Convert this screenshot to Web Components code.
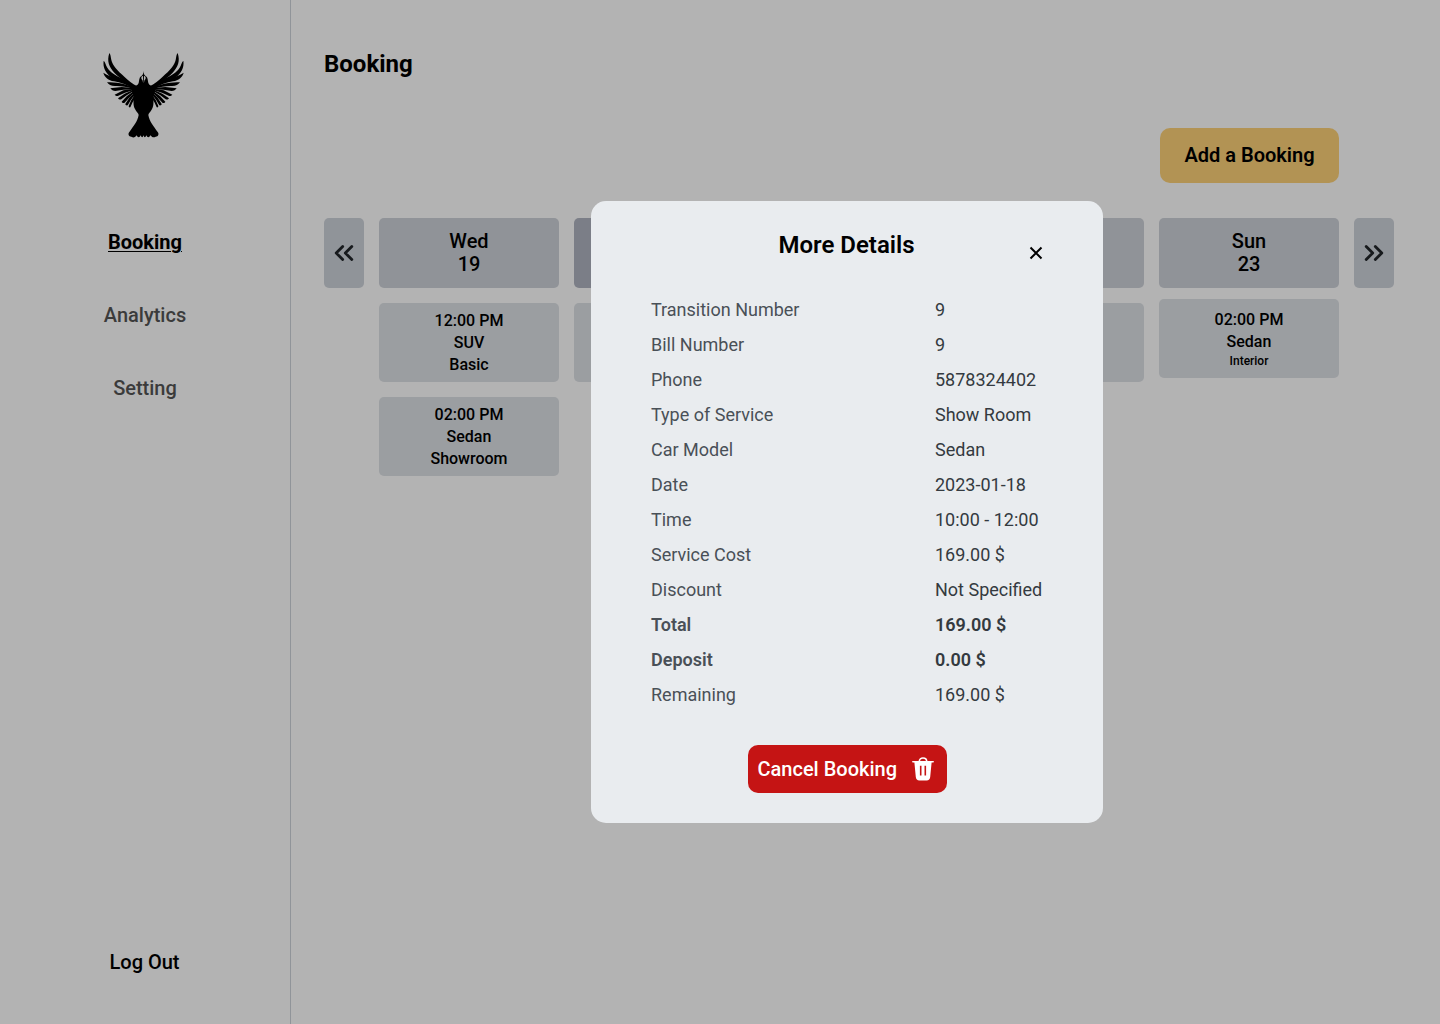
<!DOCTYPE html>
<html lang="en">
<head>
<meta charset="utf-8">
<title>Booking</title>
<style>
html,body{margin:0;height:100%;overflow:hidden;background:#b3b3b3;font-family:Roboto,"Liberation Sans",sans-serif;color:#000}
</style>
</head>
<body>
<booking-app></booking-app>
<script>
const define=(name,html,setup)=>customElements.define(name,class extends HTMLElement{
  constructor(){super();this.attachShadow({mode:'open'}).innerHTML=html;}
  connectedCallback(){if(setup)setup(this,this.shadowRoot);}
});

define('bird-logo',`
<style>:host{display:block;width:100px;height:100px}svg{display:block}</style>
<svg width="100" height="100" viewBox="0 0 300 300">
<defs><g id="wing">
<path d="M43 24C47 28 47 36 49 45C53 61 66 76 88 95C100 106 112 116 126 124L122 134C100 115 75 101 58 83C42 66 35 48 43 24Z"/>
<path d="M26 47C31 51 32 60 37 68C46 83 62 91 80 100C96 108 110 116 122 128L118 134C98 114 70 109 51 98C32 86 23 67 26 47Z"/>
<path d="M25 83C36 91 50 95 68 101C86 107 104 115 117 127L114 130C95 118 76 113 57 109C40 106 29 97 25 83Z"/>
<path d="M36 112C60 112 91 115 115 128L113 131C95 125 75 122 60 123C48 123 41 119 36 112Z"/>
<path d="M46 130L80 126L115 129L114 133L85 134L61 138C55 138 49 135 46 130Z"/>
<path d="M59 149L85 136L116 131L114 136L90 143L70 152C66 154 62 152 59 149Z"/>
<path d="M69 160L89 146L116 134L115 139L95 151L79 163C75 165 71 163 69 160Z"/>
<path d="M80 170L96 153L117 138L117 144L101 160L88 174C84 175 81 173 80 170Z"/>
<path d="M91 177L103 158L118 143L118 151L107 166L98 181C94 182 91 180 91 177Z"/>
<path d="M101 183L109 165L120 149L121 158L112 173L106 187C103 188 101 186 101 183Z"/>
</g></defs>
<use href="#wing"/><use href="#wing" transform="matrix(-1 0 0 1 291 0)"/>
<path d="M145.500 78C146 87 148 91 153 94C159 99 158 106 160 114C164 124 172 122 178 122C184 134 178 143 176 153C174 168 178 181 171 192C167 201 160 204 160 210C163 229 176 244 188 261C193 267 190 275 182 275C176 279 171 277 166 271C163 279 157 279 154 271C151 279 148 279 145.500 271C143 279 140 279 137 271C134 279 128 279 125 271C120 278 115 279 109 275C101 275 98 267 103 261C115 244 128 229 131 210C131 204 124 201 120 192C113 181 117 168 115 153C113 143 107 134 113 122C119 122 127 124 131 114C133 106 132 99 138 94C143 91 145 87 145.500 78Z"/>
<path d="M141 93Q136 100 142.500 106L144.500 114L144 94ZM150 93Q155 100 148.500 106L146.500 114L147 94Z" fill="#b3b3b3"/>
</svg>`);

define('side-link',`
<style>:host{display:block;height:24px;font-size:20px;line-height:24px;font-weight:500;color:#3b3b3b;text-align:center}
:host([active]){color:#000;font-weight:700;text-decoration:underline;text-decoration-thickness:1px;text-underline-offset:2px}
:host([strong]){color:#000}</style><slot></slot>`);

define('side-bar',`
<style>:host{display:flex;flex-direction:column;align-items:center;box-sizing:border-box;flex:none;width:291px;height:1024px;border-right:1px solid #909499;padding:45px 0 50px 0}
bird-logo{margin:0 0 0 95px;align-self:flex-start}
nav{display:flex;flex-direction:column;gap:49px;margin-top:85px}
side-link[strong]{margin-top:auto;padding-right:1px}</style>
<bird-logo></bird-logo>
<nav><side-link active>Booking</side-link><side-link>Analytics</side-link><side-link>Setting</side-link></nav>
<side-link strong>Log Out</side-link>`);

define('week-arrow',`
<style>:host{display:flex;flex:none;width:40px;height:70px;border-radius:5px;background:#909499;align-items:center;justify-content:center}
:host([next]) svg{transform:scaleX(-1)}</style>
<svg width="40" height="36" viewBox="0 0 40 36" fill="none" stroke="#171a1d" stroke-width="2.800" stroke-linecap="round" stroke-linejoin="round"><path d="M18.700 11.400L12.200 18L18.700 24.600M27.800 11.400L21.300 18L27.800 24.600"/></svg>`);

define('day-head',`
<style>:host{display:flex;flex-direction:column;align-items:center;justify-content:center;height:70px;border-radius:5px;background:#909398;font-size:20px;line-height:23px;font-weight:500}
:host([today]){background:#7b7e87}</style><slot></slot>`);

define('booking-card',`
<style>:host{display:flex;flex-direction:column;align-items:center;box-sizing:border-box;height:79px;padding-top:7px;border-radius:5px;background:#9b9ea1;font-size:16px;line-height:22px;font-weight:500}
:host([short]){padding-top:9px}
::slotted(small){font-size:12px;line-height:17px}</style><slot></slot>`);

define('day-column',`
<style>:host{display:flex;flex:none;flex-direction:column;width:180px;gap:15px}
:host([tight]){gap:11px}</style><slot></slot>`);

define('week-board',`
<style>:host{display:flex;gap:15px;align-items:flex-start}</style>
<week-arrow></week-arrow>
<day-column><day-head><span>Wed</span><span>19</span></day-head>
<booking-card><span>12:00 PM</span><span>SUV</span><span>Basic</span></booking-card>
<booking-card><span>02:00 PM</span><span>Sedan</span><span>Showroom</span></booking-card></day-column>
<day-column><day-head today></day-head><booking-card></booking-card></day-column>
<day-column><day-head></day-head></day-column>
<day-column><day-head></day-head><booking-card></booking-card></day-column>
<day-column tight><day-head><span>Sun</span><span>23</span></day-head>
<booking-card short style="padding-top:10px"><span>02:00 PM</span><span>Sedan</span><small>Interior</small></booking-card></day-column>
<week-arrow next></week-arrow>`);

define('detail-row',`
<style>:host{display:flex;height:35px;font-size:18px;line-height:35px;color:#343a40}
:host([bold]){font-weight:600}
.k{width:284px;flex:none;color:#495057}span{white-space:nowrap}</style>
<span class="k"></span><span><slot></slot></span>`,(el,root)=>{root.querySelector('.k').textContent=el.getAttribute('label')});

define('cancel-button',`
<style>:host{display:flex;box-sizing:border-box;width:199px;height:48px;border-radius:10px;background:#c51414;color:#fff;font-size:20px;font-weight:500;align-items:center;justify-content:space-between;padding:0 12px 0 10px}</style>
<span><slot></slot></span>
<svg width="24" height="26" viewBox="0 0 24 26"><path d="M8.300 5.500C8.300 .9 15.700 .9 15.700 5.500" fill="none" stroke="#fff" stroke-width="1.600"/><path d="M2 4.900H22Q23 4.900 23 5.800Q23 6.600 22 6.600H20.600L19.200 21Q18.800 24.400 15.700 24.400H8.300Q5.200 24.400 4.800 21L3.400 6.600H2Q1 6.600 1 5.800Q1 4.900 2 4.900Z" fill="#fff"/><path d="M9.700 9.700V19.500M14.300 9.700V19.500" stroke="#c51414" stroke-width="1.600"/></svg>`);

define('details-dialog',`
<style>:host{display:flex;flex-direction:column;box-sizing:border-box;position:absolute;left:591px;top:201px;width:512px;height:622px;border-radius:15px;background:#e9ecef;padding:30px 60px}
header{display:grid;grid-template-columns:1fr auto 1fr;height:28px}
h2{grid-column:2;margin:0 1px 0 0;font-size:24px;line-height:28px;font-weight:600}
svg{justify-self:end;margin-top:15px}
.rows{margin-top:33px}cancel-button{margin:auto 0 0 96.5px;transform:translateX(0)}</style>
<header><h2>More Details</h2><svg width="14" height="14" viewBox="0 0 14 14"><path d="M1.500 1.500L12.500 12.500M12.500 1.500L1.500 12.500" stroke="#000" stroke-width="2"/></svg></header>
<div class="rows">
<detail-row label="Transition Number">9</detail-row>
<detail-row label="Bill Number">9</detail-row>
<detail-row label="Phone">5878324402</detail-row>
<detail-row label="Type of Service">Show Room</detail-row>
<detail-row label="Car Model">Sedan</detail-row>
<detail-row label="Date">2023-01-18</detail-row>
<detail-row label="Time">10:00 - 12:00</detail-row>
<detail-row label="Service Cost">169.00 $</detail-row>
<detail-row label="Discount">Not Specified</detail-row>
<detail-row label="Total" bold>169.00 $</detail-row>
<detail-row label="Deposit" bold>0.00 $</detail-row>
<detail-row label="Remaining">169.00 $</detail-row>
</div>
<cancel-button>Cancel Booking</cancel-button>`);

define('add-button',`
<style>:host{display:flex;box-sizing:border-box;width:179px;height:55px;padding-bottom:2px;border-radius:10px;background:#b29354;align-items:center;justify-content:center;font-size:20px;font-weight:600}</style><span><slot></slot></span>`);

define('booking-app',`
<style>:host{display:flex;height:1024px;width:1440px;position:relative}
main{display:flex;flex-direction:column;width:1070px;padding:50px 0 0 33px}
h1{margin:0;font-size:24px;line-height:28px;font-weight:700}
add-button{margin:50px 55px 35px auto}</style>
<side-bar></side-bar>
<main><h1>Booking</h1><add-button>Add a Booking</add-button><week-board></week-board></main>
<details-dialog></details-dialog>`);
</script>
</body>
</html>
